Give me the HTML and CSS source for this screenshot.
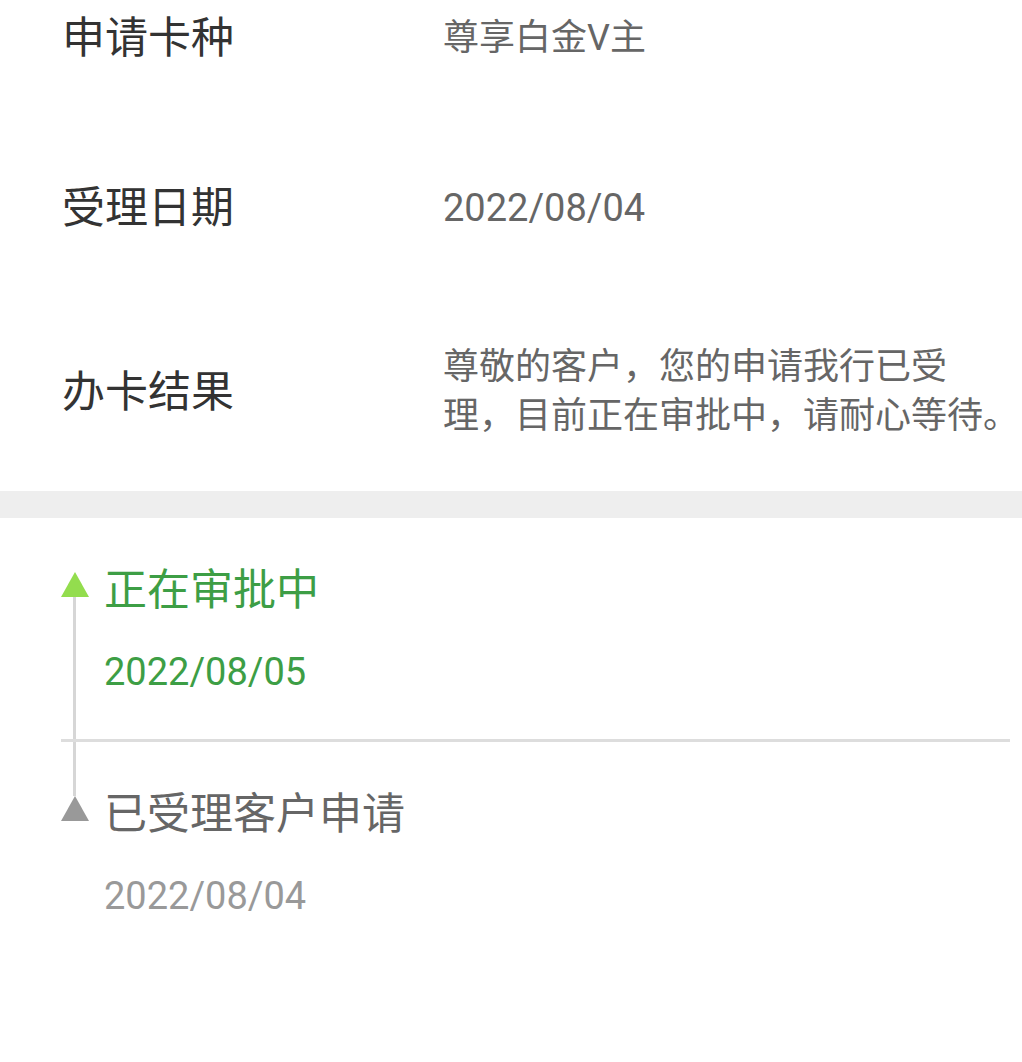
FILE: index.html
```html
<!DOCTYPE html>
<html lang="zh-CN">
<head>
<meta charset="utf-8">
<title>办卡进度</title>
<link rel="stylesheet" href="styles.css">
</head>
<body>
<div class="page">
  <section class="detail">
    <div class="row">
      <div class="label">申请卡种</div>
      <div class="value">尊享白金V主</div>
    </div>
    <div class="row">
      <div class="label">受理日期</div>
      <div class="value date">2022/08/04</div>
    </div>
    <div class="row tall">
      <div class="label">办卡结果</div>
      <div class="value">尊敬的客户，您的申请我行已受<br>理，目前正在审批中，请耐心等待。</div>
    </div>
  </section>
  <div class="gap"></div>
  <section class="timeline">
    <div class="item current">
      <div class="marker">
        <span class="tri"></span>
        <span class="line"></span>
      </div>
      <div class="content">
        <div class="title">正在审批中</div>
        <div class="time">2022/08/05</div>
      </div>
    </div>
    <div class="item done">
      <div class="marker">
        <span class="line top"></span>
        <span class="tri"></span>
      </div>
      <div class="content">
        <div class="title">已受理客户申请</div>
        <div class="time">2022/08/04</div>
      </div>
    </div>
  </section>
</div>
</body>
</html>
```
FILE: styles.css
```css
html, body {
  margin: 0;
  padding: 0;
  background: #ffffff;
}
body {
  font-family: Roboto, "Noto Sans CJK SC", sans-serif;
  overflow: hidden;
}
.page {
  width: 1022px;
  overflow: hidden;
}
.detail {
  margin-top: -47px;
}
.row {
  display: flex;
  align-items: center;
  min-height: 170px;
  padding-left: 62px;
  box-sizing: border-box;
}
.row.tall {
  min-height: 198px;
}
.label {
  width: 381px;
  flex: none;
  font-size: 43px;
  line-height: 50px;
  color: #333333;
}
.value {
  flex: 1;
  min-width: 0;
  font-size: 36px;
  line-height: 49px;
  color: #666666;
}
.value.date {
  font-size: 38px;
}
.gap {
  height: 27px;
  background: #eeeeee;
}
.timeline {
  padding: 0 12px 0 61px;
}
.item {
  display: flex;
}
.item.current {
  border-bottom: 3px solid #dddddd;
}
.marker {
  width: 28px;
  flex: none;
  display: flex;
  flex-direction: column;
  align-items: flex-start;
}
.item.current .marker {
  padding-top: 54px;
}
.tri {
  display: block;
  width: 0;
  height: 0;
  border-left: 14px solid transparent;
  border-right: 14px solid transparent;
  border-bottom: 25px solid #999999;
}
.item.current .tri {
  border-bottom-color: #93dd4e;
}
.line {
  display: block;
  width: 3px;
  margin-left: 12px;
  flex: 1;
  background: #d6d6d6;
}
.line.top {
  flex: none;
  height: 54px;
}
.content {
  margin-left: 15px;
  flex: 1;
}
.item.current .content {
  padding: 47px 0 42px;
}
.item.done .content {
  padding: 47px 0 60px;
}
.title {
  font-size: 43px;
  line-height: 50px;
  color: #666666;
}
.time {
  margin-top: 32px;
  font-size: 38px;
  line-height: 50px;
  color: #999999;
}
.item.current .title,
.item.current .time {
  color: #3d9e45;
}
```
